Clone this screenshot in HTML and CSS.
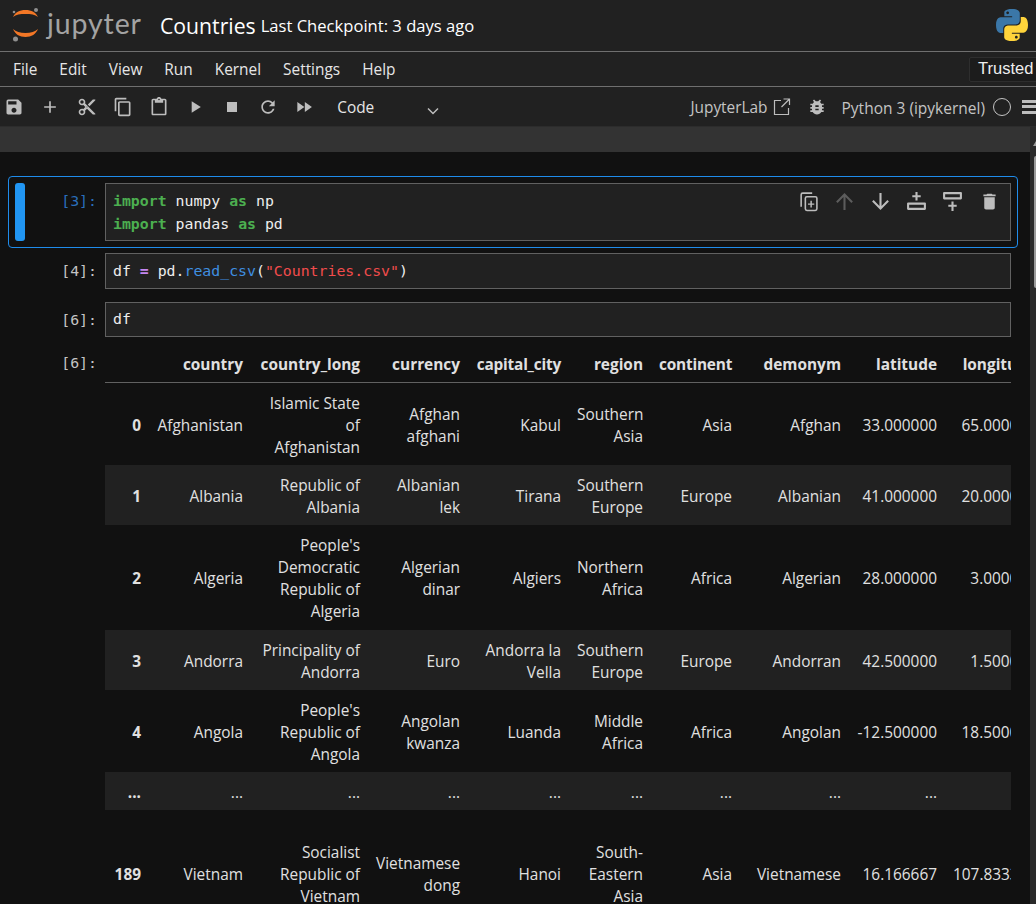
FILE: index.html
```html
<!DOCTYPE html>
<html lang="en">
<head>
<meta charset="utf-8">
<title>Countries - Jupyter Notebook</title>
<link rel="stylesheet" href="styles.css">
</head>
<body>
<div class="app">
  <header class="topbar">
    <div class="brand">
      <svg class="brand-mark" viewBox="0 0 28 34" width="28" height="34">
        <path class="arc" d="M1 9C3 4.500 7.500 2 13.500 2S24 4.500 26 9C23 6.500 19 6 13.500 6S4 6.500 1 9z"/>
        <path class="arc" d="M1 21C3 26 7.500 29 13.500 29S24 26 26 21C23 23.500 19 25 13.500 25S4 23.500 1 21z"/>
        <circle class="dot" cx="24" cy="2" r="2"/>
        <circle class="dot" cx="2" cy="4" r="1.300"/>
        <circle class="dot" cx="3.500" cy="31" r="2.500"/>
      </svg>
      <span class="wordmark">jupyter</span>
    </div>
    <span class="nb-title">Countries</span>
    <span class="checkpoint">Last Checkpoint: 3 days ago</span>
    <svg class="py-logo" viewBox="0 0 110 110" width="32" height="32">
      <path class="py-blue" d="M54.900 0C26.800 0 28.600 12.200 28.600 12.200l0 12.600h26.800v3.800H17.900S0 26.600 0 54.900c0 28.300 15.600 27.300 15.600 27.300h9.300V69s-.5-15.600 15.400-15.600h26.600s14.900.2 14.900-14.400V14.900S84.100 0 54.900 0zM40.100 8.500c2.700 0 4.800 2.200 4.800 4.800s-2.200 4.800-4.800 4.800-4.800-2.200-4.800-4.800 2.200-4.800 4.800-4.800z"/>
      <path class="py-yellow" transform="translate(110 110) rotate(180)" d="M54.900 0C26.800 0 28.600 12.200 28.600 12.200l0 12.600h26.800v3.800H17.900S0 26.600 0 54.900c0 28.300 15.600 27.300 15.600 27.300h9.300V69s-.5-15.600 15.400-15.600h26.600s14.900.2 14.900-14.400V14.900S84.100 0 54.900 0zM40.100 8.500c2.700 0 4.800 2.200 4.800 4.800s-2.200 4.800-4.800 4.800-4.800-2.200-4.800-4.800 2.200-4.800 4.800-4.800z"/>
    </svg>
  </header>

  <nav class="menubar">
    <span class="menu-item">File</span>
    <span class="menu-item">Edit</span>
    <span class="menu-item">View</span>
    <span class="menu-item">Run</span>
    <span class="menu-item">Kernel</span>
    <span class="menu-item">Settings</span>
    <span class="menu-item">Help</span>
    <span class="trusted">Trusted</span>
  </nav>

  <div class="toolbar">
    <span class="tool"><svg viewBox="0 0 24 24"><path d="M17 3H5a2 2 0 0 0-2 2v14c0 1.100.89 2 2 2h14c1.100 0 2-.9 2-2V7l-4-4zm-5 16c-1.660 0-3-1.340-3-3s1.340-3 3-3 3 1.340 3 3-1.340 3-3 3zm3-10H5V5h10v4z"/></svg></span>
    <span class="tool"><svg viewBox="0 0 24 24"><path d="M19 13h-6v6h-2v-6H5v-2h6V5h2v6h6v2z"/></svg></span>
    <span class="tool"><svg viewBox="0 0 24 24"><path d="M9.640 7.640c.23-.5.36-1.050.36-1.640 0-2.210-1.790-4-4-4S2 3.790 2 6s1.790 4 4 4c.59 0 1.140-.13 1.640-.36L10 12l-2.360 2.360C7.140 14.130 6.590 14 6 14c-2.210 0-4 1.790-4 4s1.790 4 4 4 4-1.790 4-4c0-.59-.13-1.140-.36-1.640L12 14l7 7h3v-1L9.640 7.640zM6 8c-1.100 0-2-.89-2-2s.9-2 2-2 2 .89 2 2-.9 2-2 2zm0 12c-1.100 0-2-.89-2-2s.9-2 2-2 2 .89 2 2-.9 2-2 2zm6-7.500c-.28 0-.5-.22-.5-.5s.22-.5.5-.5.5.22.5.5-.22.500-.5.500zM19 3l-6 6 2 2 7-7V3z"/></svg></span>
    <span class="tool"><svg viewBox="0 0 24 24"><path d="M16 1H4c-1.100 0-2 .9-2 2v14h2V3h12V1zm3 4H8c-1.100 0-2 .9-2 2v14c0 1.100.9 2 2 2h11c1.100 0 2-.9 2-2V7c0-1.100-.9-2-2-2zm0 16H8V7h11v14z"/></svg></span>
    <span class="tool"><svg viewBox="0 0 24 24"><path d="M19 2h-4.180C14.400.84 13.300 0 12 0c-1.300 0-2.400.84-2.820 2H5c-1.100 0-2 .9-2 2v16c0 1.100.9 2 2 2h14c1.100 0 2-.9 2-2V4c0-1.100-.9-2-2-2zm-7 0c.55 0 1 .45 1 1s-.45 1-1 1-1-.45-1-1 .45-1 1-1zm7 18H5V4h2v3h10V4h2v16z"/></svg></span>
    <span class="tool"><svg viewBox="0 0 24 24"><path d="M8 5v14l11-7z"/></svg></span>
    <span class="tool"><svg viewBox="0 0 24 24"><path d="M6 6h12v12H6z"/></svg></span>
    <span class="tool"><svg viewBox="0 0 24 24"><path d="M17.650 6.350C16.200 4.900 14.210 4 12 4c-4.420 0-7.990 3.580-7.990 8s3.570 8 7.990 8c3.730 0 6.840-2.550 7.730-6h-2.080c-.82 2.330-3.040 4-5.650 4-3.310 0-6-2.690-6-6s2.690-6 6-6c1.660 0 3.140.69 4.220 1.780L13 11h7V4l-2.350 2.350z"/></svg></span>
    <span class="tool"><svg viewBox="0 0 24 24"><path d="M4 18l8.500-6L4 6v12zm9-12v12l8.500-6L13 6z"/></svg></span>
    <span class="cell-type">Code</span>
    <svg class="chevron" viewBox="0 0 12 8" width="12" height="8"><path d="M1 1.500l5 5 5-5"/></svg>
    <span class="tool-label lab-link">JupyterLab</span>
    <svg class="launch" viewBox="0 0 18 18" width="18" height="18"><path d="M8 2.500H1.500v14h14V10M10.500 1h6v6M16.500 1l-8 8"/></svg>
    <span class="tool bug"><svg viewBox="0 0 24 24"><path d="M20 8h-2.810c-.45-.78-1.070-1.450-1.820-1.960L17 4.410 15.590 3l-2.170 2.170C12.960 5.060 12.490 5 12 5c-.49 0-.96.06-1.410.17L8.410 3 7 4.410l1.620 1.630C7.880 6.550 7.260 7.220 6.810 8H4v2h2.090c-.05.33-.09.66-.09 1v1H4v2h2v1c0 .34.04.67.09 1H4v2h2.810c1.040 1.790 2.970 3 5.190 3s4.150-1.210 5.190-3H20v-2h-2.090c.05-.33.09-.66.09-1v-1h2v-2h-2v-1c0-.34-.04-.67-.09-1H20V8zm-6 8h-4v-2h4v2zm0-4h-4v-2h4v2z"/></svg></span>
    <span class="tool-label kernel">Python 3 (ipykernel)</span>
    <span class="kernel-status"></span>
    <span class="hamburger"></span>
  </div>

  <div class="band"></div>

  <main class="notebook">
    <section class="cell cell-active">
      <div class="collapser"></div>
      <div class="prompt prompt-active">[3]:</div>
      <div class="input">
        <pre class="code"><span class="kw">import</span> numpy <span class="kw">as</span> np
<span class="kw">import</span> pandas <span class="kw">as</span> pd</pre>
        <div class="cell-tools">
          <svg viewBox="0 0 20 20"><path class="outline" d="M13.500 2H4.500A1.500 1.500 0 0 0 3 3.500V15"/><rect class="outline" x="7" y="5.500" width="11" height="13" rx="1.500"/><path d="M11.800 9.300h1.400v2.500h2.300v1.400h-2.300v2.500h-1.400v-2.500H9.500v-1.400h2.300z"/></svg>
          <svg class="dim" viewBox="2 2 20 20"><path d="M4 12l1.410 1.410L11 7.830V20h2V7.830l5.580 5.590L20 12l-8-8-8 8z"/></svg>
          <svg viewBox="2 2 20 20"><path d="M20 12l-1.410-1.410L13 16.170V4h-2v12.170l-5.580-5.590L4 12l8 8 8-8z"/></svg>
          <svg viewBox="2 2 20 20"><path d="M11 3h2v3h3v2h-3v3h-2V8H8V6h3z"/><path fill-rule="evenodd" d="M4 13h16a1 1 0 0 1 1 1v5a1 1 0 0 1-1 1H4a1 1 0 0 1-1-1v-5a1 1 0 0 1 1-1zm1 2v3h14v-3z"/></svg>
          <svg viewBox="2 2 20 20"><path fill-rule="evenodd" d="M4 3h16a1 1 0 0 1 1 1v5a1 1 0 0 1-1 1H4a1 1 0 0 1-1-1V4a1 1 0 0 1 1-1zm1 2v3h14V5z"/><path d="M11 12h2v3h3v2h-3v4h-2v-4H8v-2h3z"/></svg>
          <svg viewBox="0 0 24 24"><path d="M6 19c0 1.100.9 2 2 2h8c1.100 0 2-.9 2-2V7H6v12zM19 4h-3.500l-1-1h-5l-1 1H5v2h14V4z"/></svg>
        </div>
      </div>
    </section>

    <section class="cell cell-second">
      <div class="collapser-space"></div>
      <div class="prompt">[4]:</div>
      <div class="input">
        <pre class="code">df <span class="op">=</span> pd.<span class="fn">read_csv</span>(<span class="str">"Countries.csv"</span>)</pre>
      </div>
    </section>

    <section class="cell cell-third">
      <div class="collapser-space"></div>
      <div class="prompt">[6]:</div>
      <div class="input">
        <pre class="code">df</pre>
      </div>
    </section>

    <section class="cell cell-output">
      <div class="collapser-space"></div>
      <div class="prompt prompt-output">[6]:</div>
      <div class="output">
        <table class="frame">
          <colgroup>
            <col class="c0"><col class="c1"><col class="c2"><col class="c3"><col class="c4"><col class="c5"><col class="c6"><col class="c7"><col class="c8"><col class="c9">
          </colgroup>
          <thead>
            <tr><th></th><th>country</th><th>country_long</th><th>currency</th><th class="tight">capital_city</th><th>region</th><th class="tight">continent</th><th>demonym</th><th>latitude</th><th>longitude</th></tr>
          </thead>
          <tbody>
            <tr><th>0</th><td>Afghanistan</td><td>Islamic State<br>of<br>Afghanistan</td><td>Afghan<br>afghani</td><td>Kabul</td><td>Southern<br>Asia</td><td>Asia</td><td>Afghan</td><td>33.000000</td><td>65.000000</td></tr>
            <tr><th>1</th><td>Albania</td><td>Republic of<br>Albania</td><td>Albanian<br>lek</td><td>Tirana</td><td>Southern<br>Europe</td><td>Europe</td><td>Albanian</td><td>41.000000</td><td>20.000000</td></tr>
            <tr class="four"><th>2</th><td>Algeria</td><td>People's<br>Democratic<br>Republic of<br>Algeria</td><td>Algerian<br>dinar</td><td>Algiers</td><td>Northern<br>Africa</td><td>Africa</td><td>Algerian</td><td>28.000000</td><td>3.000000</td></tr>
            <tr><th>3</th><td>Andorra</td><td>Principality of<br>Andorra</td><td>Euro</td><td>Andorra la<br>Vella</td><td>Southern<br>Europe</td><td>Europe</td><td>Andorran</td><td>42.500000</td><td>1.500000</td></tr>
            <tr><th>4</th><td>Angola</td><td>People's<br>Republic of<br>Angola</td><td>Angolan<br>kwanza</td><td>Luanda</td><td>Middle<br>Africa</td><td>Africa</td><td>Angolan</td><td>-12.500000</td><td>18.500000</td></tr>
            <tr><th>...</th><td>...</td><td>...</td><td>...</td><td>...</td><td>...</td><td>...</td><td>...</td><td>...</td><td>...</td></tr>
            <tr class="tall"><th>189</th><td>Vietnam</td><td>Socialist<br>Republic of<br>Vietnam</td><td>Vietnamese<br>dong</td><td>Hanoi</td><td>South-<br>Eastern<br>Asia</td><td>Asia</td><td>Vietnamese</td><td>16.166667</td><td>107.833333</td></tr>
          </tbody>
        </table>
      </div>
    </section>
    <div class="scrollbar"><span class="arrow-up"></span><span class="thumb"></span></div>
  </main>
</div>
</body>
</html>
```
FILE: styles.css
```css
* { box-sizing: border-box; }
html, body { margin: 0; height: 100%; }
body {
  background: #111;
  color: #e0e0e0;
  font-family: "Open Sans", "Noto Sans", "Liberation Sans", sans-serif;
  font-size: 15.4px;
  overflow: hidden;
}
.app { width: 1036px; height: 904px; overflow: hidden; display: flex; flex-direction: column; }

.topbar {
  height: 52px; flex: none; background: #212121; border-bottom: 1px solid #6f6f6f;
  display: flex; align-items: center; padding-left: 12px; padding-right: 8px;
}
.brand { width: 148px; flex: none; display: flex; align-items: center; gap: 7px; }
.brand-mark { flex: none; margin-top: -2px; }
.arc { fill: #f37726; }
.dot { fill: #8f8f8f; }
.wordmark {
  font-family: "Lato", sans-serif; font-weight: 400; font-size: 28.500px; line-height: 36px;
  letter-spacing: .9px; color: #a3a3a3; margin-top: -5px;
}
.nb-title { font-size: 21.2px; color: #fff; margin-right: 5px; }
.checkpoint { font-size: 16.6px; color: #fff; }
.py-logo { margin-left: auto; margin-top: -1px; }
.py-blue { fill: #3b77a8; }
.py-yellow { fill: #ffd43b; }

.menubar {
  height: 35px; flex: none; background: #212121; border-bottom: 1px solid #6f6f6f;
  display: flex; align-items: center; padding-left: 13px;
}
.menu-item { margin-right: 22px; color: #e6e6e6; }
.trusted {
  margin-left: auto; height: 25px; width: 72px; flex: none; padding-left: 8px; margin-right: -5px;
  border: 1px solid #2e2e2e; border-radius: 2px; background: #1c1c1c;
  font-family: "Liberation Sans", sans-serif; font-size: 16.5px; line-height: 21px; color: #eee;
  white-space: nowrap; overflow: hidden;
}

.toolbar {
  height: 40px; flex: none; background: #212121; border-bottom: 1px solid #2c2c2c;
  display: flex; align-items: center; padding-left: 4px; overflow: hidden;
}
.tool { width: 20px; height: 20px; margin-right: 16.250px; flex: none; display: block; }
.tool svg { display: block; width: 20px; height: 20px; fill: #bdbdbd; }
.cell-type { color: #e6e6e6; margin-left: 7px; width: 90px; flex: none; padding-top: 2px; }
.chevron { flex: none; margin-top: 8px; }
.chevron path { fill: none; stroke: #bdbdbd; stroke-width: 1.500; }
.tool-label { color: #c4c4c4; white-space: nowrap; padding-top: 2px; }
.lab-link { margin-left: auto; }
.launch { flex: none; margin-left: 5px; margin-right: 16px; }
.launch path { fill: none; stroke: #bdbdbd; stroke-width: 1.200; }
.toolbar .bug { margin-right: 15px; }
.kernel { flex: none; font-size: 15.500px; }
.kernel-status {
  width: 18px; height: 18px; flex: none; border: 1.500px solid #c4c4c4; border-radius: 50%;
  margin-left: 8px; margin-right: 11px;
}
.hamburger {
  width: 16px; height: 14px; flex: none; margin-right: -2px;
  border-top: 3px solid #bdbdbd; border-bottom: 3px solid #bdbdbd;
}
.hamburger::after { content: ""; display: block; height: 3px; margin-top: 2.500px; background: #bdbdbd; }

.band { height: 25px; flex: none; background: #333; }

.notebook { flex: 1; position: relative; padding-top: 24px; min-height: 0; }
.scrollbar { position: absolute; right: 0; top: -25px; bottom: 0; width: 6px; background: #2a2a2a; }
.arrow-up {
  position: absolute; left: 3px; top: 14px; width: 0; height: 0;
  border-left: 3px solid transparent; border-right: 3px solid transparent; border-bottom: 5px solid #9a9a9a;
}
.thumb { position: absolute; left: 4px; right: 0; top: 29px; height: 132px; background: #9a9a9a; border-radius: 2px 0 0 2px; }

.cell { display: flex; margin-left: 8px; width: 1010px; border: 1px solid transparent; padding: 0 6px; }
.cell-active { border-color: #1f8ceb; border-radius: 4px; padding-top: 6px; padding-bottom: 6px; }
.cell-second { margin-top: -1px; padding-top: 5px; }
.cell-third { padding-top: 11px; }
.cell-output { padding-top: 8px; }
.collapser { width: 10px; flex: none; background: #2196f3; border-radius: 3px; }
.collapser-space { width: 10px; flex: none; }
.prompt {
  width: 72px; flex: none; margin-right: 8px; text-align: right;
  font-family: "DejaVu Sans Mono", "Liberation Mono", monospace; font-size: 14.850px; line-height: 23px;
  color: #c4c4c4; padding-top: 7px;
}
.prompt-active { color: #2a6ebb; }
.prompt-output { padding-top: 5px; }
.input { flex: 1; position: relative; background: #212121; border: 1px solid #616161; padding: 6px 7px 5px; min-width: 0; }
.cell-third .input { padding: 5px 7px; }
.cell-active .input { padding-bottom: 4px; }
.code {
  margin: 0; font-family: "DejaVu Sans Mono", "Liberation Mono", monospace; font-size: 14.850px; line-height: 23px; color: #eee;
}
.kw { color: #4caf50; font-weight: bold; }
.op { color: #c586f0; font-weight: bold; }
.fn { color: #3f8fe0; }
.str { color: #f14c4c; }
.cell-tools { position: absolute; right: 10.500px; top: 7px; display: flex; gap: 15.200px; align-items: center; }
.cell-tools svg { width: 21px; height: 21px; fill: #bdbdbd; display: block; }
.cell-tools .dim { fill: #5c5c5c; }
.cell-tools .outline { fill: none; stroke: #bdbdbd; stroke-width: 1.500; }

.output { flex: 1; min-width: 0; overflow: hidden; }
.frame { border-collapse: collapse; table-layout: fixed; width: 939px; color: #e0e0e0; }
.c0 { width: 44px; } .c1 { width: 102px; } .c2 { width: 117px; } .c3 { width: 100px; }
.c4 { width: 101px; } .c5 { width: 82px; } .c6 { width: 89px; } .c7 { width: 109px; }
.c8 { width: 96px; } .c9 { width: 99px; }
.frame th, .frame td { padding: 10px 8px 6px; text-align: right; vertical-align: middle; line-height: 22px; white-space: nowrap; }
.frame th { font-weight: 700; }
.frame th.tight { letter-spacing: -.2px; }
.frame thead th { border-bottom: 1px solid #616161; padding-top: 7px; padding-bottom: 6px; }
.frame tbody tr:nth-child(even) { background: #212121; }
.frame .four { height: 105px; }
.frame .four th, .frame .four td { padding-top: 9px; padding-bottom: 7px; }
.frame .tall { height: 126px; }
```
